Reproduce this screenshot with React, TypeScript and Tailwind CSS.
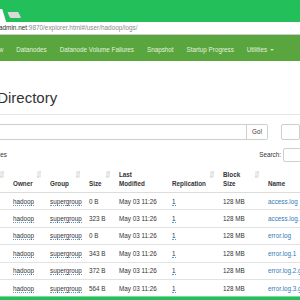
import React from "react";

const SortIcon = () => (
  <svg
    className="absolute right-[5px] top-[5px]"
    width="4"
    height="7"
    viewBox="0 0 4 7"
    fill="none"
    stroke="#c4c4c4"
    strokeWidth="0.7"
  >
    <path d="M1 0.3V6.5M0.2 5.4L1 6.5L1.8 5.4" />
    <path d="M3 0.5V6.7M2.2 1.6L3 0.5L3.8 1.6" />
  </svg>
);

const rows = [
  { size: "0 B", name: "access.log" },
  { size: "323 B", name: "access.log.1" },
  { size: "0 B", name: "error.log" },
  { size: "343 B", name: "error.log.1" },
  { size: "372 B", name: "error.log.2.gz" },
  { size: "564 B", name: "error.log.3.gz" },
];

const cols = "grid grid-cols-[9px_37px_39px_30px_53px_51px_45px_70px]";

export default function App() {
  return (
    <div className="w-[300px] h-[300px] overflow-hidden bg-white flex flex-col font-['Liberation_Sans',Arial,sans-serif]">
      {/* browser tab strip */}
      <div className="h-[22px] shrink-0 bg-[#22bf5a] relative">
        <svg className="absolute left-0 top-0" width="30" height="22" viewBox="0 0 30 22">
          <path d="M-2 9H2.2L6.2 22H-2Z" fill="#ffffff" />
          <path d="M8.2 12H17.6Q18.3 12 18.6 12.7L20.8 17.3Q21 18 20.3 18H10.8Q10.1 18 9.8 17.3L7.7 12.7Q7.5 12 8.2 12Z" fill="#d9d9d9" />
        </svg>
      </div>
      {/* address bar */}
      <div className="h-[13px] shrink-0 bg-white border-b border-[#cdcdcd] flex items-center whitespace-nowrap text-[6.4px] leading-none">
        <span className="-ml-[1px] text-[#303030]">admin.net</span>
        <span className="text-[#8a8a8a]">:9870/explorer.html#/user/hadoop/logs/</span>
      </div>
      {/* navbar */}
      <nav className="h-[26px] shrink-0 bg-[#59a63f] flex items-center pt-[3px] whitespace-nowrap text-[6.3px] text-[#e4f1de]">
        <span className="-ml-[29.5px] px-[6.5px]">Overview</span>
        <span className="px-[6.5px]">Datanodes</span>
        <span className="px-[6.5px]">Datanode Volume Failures</span>
        <span className="px-[6.5px]">Snapshot</span>
        <span className="px-[6.5px]">Startup Progress</span>
        <span className="px-[6.5px] flex items-center gap-[3px]">
          Utilities
          <span className="inline-block w-0 h-0 border-l-[2px] border-r-[2px] border-t-[2px] border-l-transparent border-r-transparent border-t-[#cfe5c5]" />
        </span>
      </nav>
      {/* page */}
      <div className="flex-1 min-h-0 overflow-hidden flex flex-col text-[#333]">
        <div className="h-[54px] shrink-0 border-b border-[#e6e6e6] pt-[29px]">
          <h1 className="-ml-[57px] text-[15px] leading-[16.5px] whitespace-nowrap text-[#333]">Browse Directory</h1>
        </div>
        {/* path input */}
        <div className="mt-[9px] h-[16px] shrink-0 flex">
          <div className="-ml-[4px] w-[267px] h-full border border-[#cfcfcf] bg-white" />
          <div className="w-[22px] h-full border border-l-0 border-[#cfcfcf] rounded-r-[2px] flex items-center justify-center text-[6.3px] text-[#333]">
            Go!
          </div>
          <div className="ml-[13px] w-[20px] h-full border border-[#cfcfcf] rounded-[2px]" />
        </div>
        {/* entries / search */}
        <div className="mt-[8px] h-[14px] shrink-0 flex items-center text-[6.3px] whitespace-nowrap">
          <span className="-ml-[12px]">entries</span>
          <span className="ml-auto mr-[2px] -translate-x-[0px]">Search:</span>
          <div className="w-[30px] h-full border border-[#cfcfcf] rounded-[2px] -mr-[13px]" />
        </div>
        {/* table */}
        <div className="mt-[4px] text-[6.3px] leading-[9px] whitespace-nowrap">
          <div className={`${cols} h-[27px] border-b border-[#dcdcdc] font-bold`}>
            <div className="relative"><SortIcon /></div>
            <div className="relative pl-[4px] flex items-end pb-[4px]">Owner<SortIcon /></div>
            <div className="relative pl-[4px] flex items-end pb-[4px]">Group<SortIcon /></div>
            <div className="relative pl-[4px] flex items-end pb-[4px]">Size<SortIcon /></div>
            <div className="relative pl-[4px] flex flex-col justify-end pb-[4px]">
              <span>Last</span>
              <span>Modified</span>
            </div>
            <div className="relative pl-[4px] flex items-end pb-[4px]">Replication<SortIcon /></div>
            <div className="relative pl-[4px] flex flex-col justify-end pb-[4px]">
              <span>Block</span>
              <span>Size</span>
              <SortIcon />
            </div>
            <div className="relative pl-[4px] flex items-end pb-[4px]">Name</div>
          </div>
          {rows.map((r) => (
            <div key={r.name} className={`${cols} h-[17.4px] border-b border-[#e2e2e2] items-center`}>
              <div />
              <div className="pl-[4px]">
                <span className="border-b border-dotted border-[#5b9bd5]">hadoop</span>
              </div>
              <div className="pl-[4px]">
                <span className="border-b border-dotted border-[#5b9bd5]">supergroup</span>
              </div>
              <div className="pl-[4px]">{r.size}</div>
              <div className="pl-[4px]">May 03 11:26</div>
              <div className="pl-[4px]">
                <span className="border-b border-dotted border-[#5b9bd5]">1</span>
              </div>
              <div className="pl-[4px]">128 MB</div>
              <div className="pl-[4px] text-[#337ab7]">{r.name}</div>
            </div>
          ))}
        </div>
      </div>
      {/* bottom frame */}
      <div className="h-[4px] shrink-0 bg-[#22bf5a] border-t border-[#7fd9a0]" />
    </div>
  );
}
